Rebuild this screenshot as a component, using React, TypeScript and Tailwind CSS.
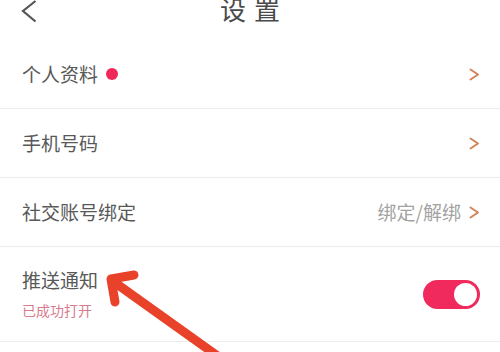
import React from "react";

const font = { fontFamily: '"Noto Sans CJK SC", "Noto Sans", sans-serif' };

function Chevron() {
  return (
    <svg width="11" height="13" viewBox="0 0 11 13" className="shrink-0">
      <polyline points="1.5,1.5 9,6.5 1.5,11.5" fill="none" stroke="#d28457" strokeWidth="2" strokeLinecap="round" strokeLinejoin="round" />
    </svg>
  );
}

export default function App() {
  return (
    <div className="relative w-[500px] h-[352px] overflow-hidden bg-white text-[#585858]" style={font}>
      {/* header */}
      <div className="grid grid-cols-[1fr_auto_1fr] items-start h-[40px]">
        <div className="pl-[21px] pt-0">
          <svg width="16" height="23" viewBox="0 0 16 23">
            <polyline points="14.5,1 2,11 14.5,21.5" fill="none" stroke="#555" strokeWidth="2.2" strokeLinejoin="miter" />
          </svg>
        </div>
        <div className="text-[26px] leading-[26px] -mt-[4px] tracking-[8px] pl-[8px] text-[#4a4a4a]">设置</div>
        <div />
      </div>

      {/* rows */}
      <div className="flex flex-col">
        <div className="h-[69px] flex items-center justify-between pl-[22px] pr-[20px] border-b border-[#ececec]">
          <div className="flex items-center text-[19px] leading-[26px]">
            <span>个人资料</span>
            <span className="ml-[8px] w-[12px] h-[12px] rounded-full bg-[#f0285a]" />
          </div>
          <Chevron />
        </div>
        <div className="h-[69px] flex items-center justify-between pl-[22px] pr-[20px] border-b border-[#ececec]">
          <span className="text-[19px] leading-[26px]">手机号码</span>
          <Chevron />
        </div>
        <div className="h-[69px] flex items-center justify-between pl-[22px] pr-[20px] border-b border-[#ececec]">
          <span className="text-[19px] leading-[26px]">社交账号绑定</span>
          <div className="flex items-center gap-[8px]">
            <span className="text-[19px] leading-[26px] text-[#a3a3a3]">绑定/解绑</span>
            <Chevron />
          </div>
        </div>
        <div className="h-[95px] flex items-center justify-between pl-[22px] pr-[20px] border-b border-[#ececec]">
          <div className="flex flex-col pb-[2px]">
            <span className="text-[19px] leading-[26px]">推送通知</span>
            <span className="mt-[7px] text-[14px] leading-[20px] text-[#d77b8e]">已成功打开</span>
          </div>
          <div className="w-[57px] h-[29px] rounded-full bg-[#f02a5c] flex items-center justify-end pr-[3px]">
            <div className="w-[23px] h-[23px] rounded-full bg-white" />
          </div>
        </div>
      </div>

      {/* annotation arrow */}
      <svg className="absolute inset-0 pointer-events-none" width="500" height="352" viewBox="0 0 500 352">
        <g fill="none" stroke="#e8432a" strokeWidth="9" strokeLinecap="round" strokeLinejoin="round">
          <line x1="226" y1="362" x2="114" y2="282" />
          <polyline points="134,275 111,279 115,302" />
        </g>
      </svg>
    </div>
  );
}
